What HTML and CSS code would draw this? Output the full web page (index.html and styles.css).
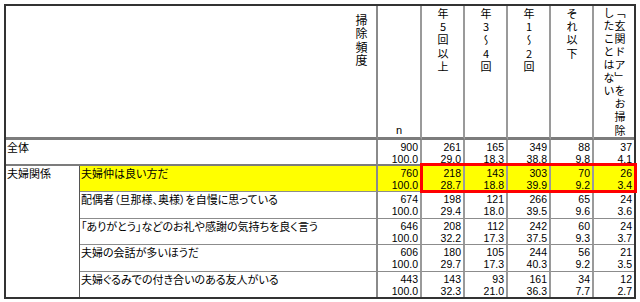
FILE: index.html
```html
<!DOCTYPE html>
<html lang="ja">
<head>
<meta charset="utf-8">
<title>掃除頻度</title>
<link rel="stylesheet" href="styles.css">
</head>
<body>
<div class="sheet">
  <div class="cell hd hd-label"><span class="vt vt-title">掃除頻度</span></div>
  <div class="cell hd hd-n"><span class="n-mark">n</span></div>
  <div class="cell hd hd-col"><span class="vt">年5回以上</span></div>
  <div class="cell hd hd-col"><span class="vt">年3～4回</span></div>
  <div class="cell hd hd-col"><span class="vt">年1～2回</span></div>
  <div class="cell hd hd-col"><span class="vt">それ以下</span></div>
  <div class="cell hd hd-col last"><span class="vt vt-two">「玄関ドア」をお掃除<br>したことはない</span></div>

  <div class="cell total total-label">全体</div>
  <div class="cell total num nsep">900<br>100.0</div>
  <div class="cell total num">261<br>29.0</div>
  <div class="cell total num">165<br>18.3</div>
  <div class="cell total num">349<br>38.8</div>
  <div class="cell total num">88<br>9.8</div>
  <div class="cell total num last">37<br>4.1</div>

  <div class="cell cat">夫婦関係</div>

  <div class="cell item hl">夫婦仲は良い方だ</div>
  <div class="cell num nsep hl">760<br>100.0</div>
  <div class="cell num hl">218<br>28.7</div>
  <div class="cell num hl">143<br>18.8</div>
  <div class="cell num hl">303<br>39.9</div>
  <div class="cell num hl">70<br>9.2</div>
  <div class="cell num hl last">26<br>3.4</div>

  <div class="cell item">配偶者（旦那様、奥様）を自慢に思っている</div>
  <div class="cell num nsep">674<br>100.0</div>
  <div class="cell num">198<br>29.4</div>
  <div class="cell num">121<br>18.0</div>
  <div class="cell num">266<br>39.5</div>
  <div class="cell num">65<br>9.6</div>
  <div class="cell num last">24<br>3.6</div>

  <div class="cell item">「ありがとう」などのお礼や感謝の気持ちを良く言う</div>
  <div class="cell num nsep">646<br>100.0</div>
  <div class="cell num">208<br>32.2</div>
  <div class="cell num">112<br>17.3</div>
  <div class="cell num">242<br>37.5</div>
  <div class="cell num">60<br>9.3</div>
  <div class="cell num last">24<br>3.7</div>

  <div class="cell item">夫婦の会話が多いほうだ</div>
  <div class="cell num nsep">606<br>100.0</div>
  <div class="cell num">180<br>29.7</div>
  <div class="cell num">105<br>17.3</div>
  <div class="cell num">244<br>40.3</div>
  <div class="cell num">56<br>9.2</div>
  <div class="cell num last">21<br>3.5</div>

  <div class="cell item bottom">夫婦ぐるみでの付き合いのある友人がいる</div>
  <div class="cell num nsep bottom">443<br>100.0</div>
  <div class="cell num bottom">143<br>32.3</div>
  <div class="cell num bottom">93<br>21.0</div>
  <div class="cell num bottom">161<br>36.3</div>
  <div class="cell num bottom">34<br>7.7</div>
  <div class="cell num bottom last">12<br>2.7</div>

  <div class="redbox"></div>
</div>
</body>
</html>
```

FILE: styles.css
```css
* {
  box-sizing: border-box;
}

html, body {
  margin: 0;
  padding: 0;
  background: #ffffff;
}

body {
  font-family: "Noto Sans CJK JP", "Liberation Sans", sans-serif;
  color: #000;
}

.sheet {
  position: relative;
  display: grid;
  grid-template-columns: 74px 298px 44px 43px 43px 43px 43px 40px;
  grid-template-rows: 134px 26px 26px 27px 26px 27px 25px;
  width: 632px;
  margin: 4px 0 0 4px;
  border: 2px solid #333;
}

.cell {
  border-right: 2px solid #9a9a9a;
  border-bottom: 1px solid #8c8c8c;
  overflow: visible;
}

.cell.last {
  border-right: none;
}

.cell.bottom {
  border-bottom: none;
}

/* header */
.hd {
  border-bottom: 3px solid #7c7c7c;
  display: flex;
}

.hd-label {
  grid-column: span 2;
  justify-content: flex-end;
  align-items: flex-start;
  padding: 8px 9px 0 0;
  border-right: 2px solid #8a8a8a;
}

.hd-n {
  justify-content: center;
  align-items: flex-end;
  padding-bottom: 1px;
}

.n-mark {
  font-family: "Liberation Sans", sans-serif;
  font-size: 11px;
  line-height: 12px;
}

.hd-col {
  justify-content: center;
  align-items: flex-start;
  padding-top: 2px;
}

.vt {
  writing-mode: vertical-rl;
  text-orientation: upright;
  white-space: nowrap;
  font-size: 11px;
  line-height: 11px;
  letter-spacing: 2.3px;
}

.vt-title {
  font-size: 12px;
  line-height: 12px;
  letter-spacing: 1.5px;
}

.vt-two {
  letter-spacing: 2.1px;
}

.hd-col.last {
  padding-top: 1px;
}

/* labels */
.total-label,
.cat,
.item {
  font-size: 11px;
  line-height: 12px;
  padding: 1px 0 0 1px;
  font-feature-settings: "palt";
  white-space: nowrap;
}

.total-label {
  grid-column: span 2;
  border-right: 2px solid #8a8a8a;
}

.total {
  border-bottom: 2px solid #7c7c7c;
}

.cat {
  grid-row: span 5;
  border-right: 1px solid #555;
  border-bottom: none;
}

.item {
  border-right: 2px solid #8a8a8a;
}

/* numbers */
.num {
  font-family: "Liberation Sans", sans-serif;
  font-size: 10.5px;
  line-height: 12px;
  text-align: right;
  padding: 1px 2px 0 0;
}

.hl {
  background: #ffff00;
}

.redbox {
  position: absolute;
  grid-column: 4 / 9;
  grid-row: 3 / 4;
  top: -3px;
  bottom: -1px;
  left: -2px;
  right: -3px;
  border: 3px solid #ff0000;
  pointer-events: none;
}
```
